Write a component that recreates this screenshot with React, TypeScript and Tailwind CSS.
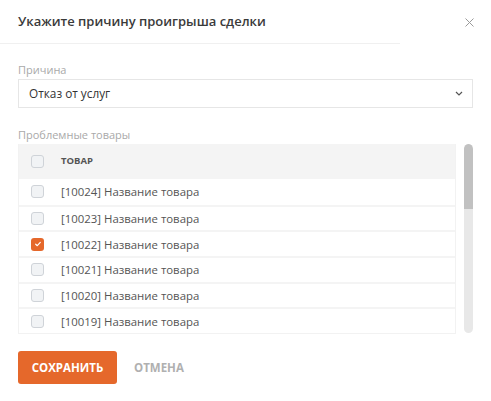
import React from "react";

const items = [
  { id: 10024, checked: false },
  { id: 10023, checked: false },
  { id: 10022, checked: true },
  { id: 10021, checked: false },
  { id: 10020, checked: false },
  { id: 10019, checked: false },
];

function Checkbox({ checked }: { checked?: boolean }) {
  if (checked) {
    return (
      <span className="flex h-[13px] w-[13px] shrink-0 items-center justify-center rounded-[3px] bg-[#e5682b]">
        <svg width="8" height="8" viewBox="0 0 8 8" fill="none">
          <path d="M1.7 4.2 L3.3 5.7 L6.3 2.4" stroke="white" strokeWidth="1.2" strokeLinecap="round" strokeLinejoin="round" />
        </svg>
      </span>
    );
  }
  return <span className="block h-[13px] w-[13px] shrink-0 rounded-[3px] border border-[#cfd3d8] bg-[#f1f3f5]" />;
}

export default function App() {
  return (
    <div
      className="relative h-[401px] w-[491px] overflow-hidden bg-white text-[#333]"
      style={{ fontFamily: '"Open Sans", "Noto Sans", sans-serif' }}
    >
      <div className="flex h-[43px] items-center justify-between pl-[18px] pr-[17px]">
        <div className="text-[13px] font-semibold text-[#3a3a3a]">Укажите причину проигрыша сделки</div>
        <svg width="9" height="9" viewBox="0 0 9 9" className="mt-[1px]">
          <path d="M0.5 0.5 L8.5 8.5 M8.5 0.5 L0.5 8.5" stroke="#9a9a9a" strokeWidth="1" />
        </svg>
      </div>
      <div className="h-px w-[400px] bg-[#f0f0f0]" />

      <div className="px-[18px]">
        <div className="mt-[18px] text-[11px] leading-[15px] text-[#a9a9a9]">Причина</div>
        <div className="mt-[2px] flex h-[29px] w-[455px] items-center justify-between border border-[#e6e6e6] pl-[10px] pr-[9px]">
          <span className="text-[11.8px] text-[#333]">Отказ от услуг</span>
          <svg width="8" height="5" viewBox="0 0 8 5">
            <path d="M1 1 L4 4 L7 1" stroke="#555" strokeWidth="1.2" fill="none" />
          </svg>
        </div>

        <div className="mt-[19px] text-[11px] leading-[15px] text-[#a9a9a9]">Проблемные товары</div>
        <div className="mt-[2px] flex w-[455px] justify-between">
          <div className="w-[438px] border-x border-b border-[#f2f2f2]">
            <div className="flex h-[35px] items-center bg-[#f4f4f4] pl-[12px]">
              <Checkbox />
              <span className="ml-[17px] text-[9.5px] font-bold text-[#555]">ТОВАР</span>
            </div>
            {items.map((it, i) => (
              <div
                key={it.id}
                className={`flex h-[25.67px] items-center pl-[12px] ${i > 0 ? "border-t-2 border-[#f4f4f4]" : ""}`}
              >
                <Checkbox checked={it.checked} />
                <span className="ml-[17px] text-[11.4px] text-[#555]">[{it.id}] Название товара</span>
              </div>
            ))}
          </div>
          <div className="h-[189px] w-[9px] overflow-hidden rounded-full bg-[#e8e8e8]">
            <div className="h-[65px] w-full rounded-t-full bg-[#c1c1c1]" />
          </div>
        </div>

        <div className="mt-[17px] flex items-center">
          <button className="flex h-[33px] w-[99px] items-center justify-center rounded-[3px] bg-[#e5682b] text-[11.5px] font-bold text-white">
            СОХРАНИТЬ
          </button>
          <button className="ml-[17px] text-[11.5px] font-bold text-[#b0b0b0]">ОТМЕНА</button>
        </div>
      </div>
    </div>
  );
}
